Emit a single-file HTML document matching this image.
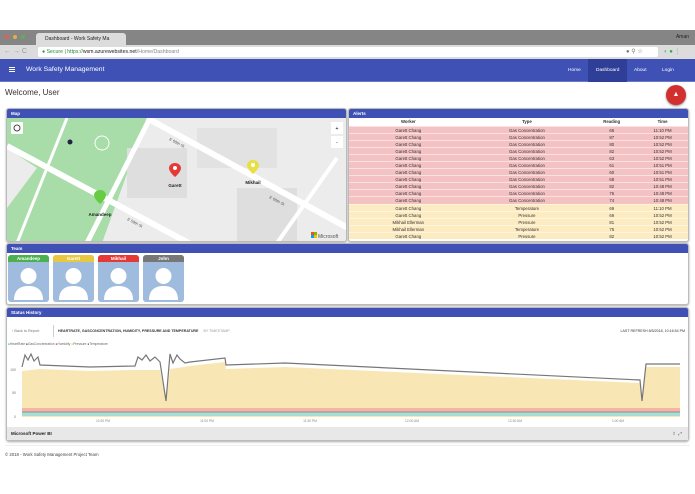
<!DOCTYPE html>
<html><head><meta charset="utf-8"><style>
*{box-sizing:border-box;margin:0;padding:0}
body{width:695px;height:494px;background:#fff;font-family:"Liberation Sans",sans-serif;position:relative;overflow:hidden;color:#333}
.abs{position:absolute}
.panel{position:absolute;border:1px solid #bbb;border-radius:3px;background:#fff;overflow:hidden;box-shadow:0 1px 2px #aaa}
.ph{height:9px;background:#3f51b5;color:#fff;font-size:4.5px;font-weight:bold;line-height:9px;padding-left:4px}
.row{display:flex;height:7.05px;font-size:4.3px;line-height:7px;text-align:center;border-top:0.5px solid rgba(255,255,255,.5)}
.row div{overflow:hidden;white-space:nowrap}
.c1{width:35%}.c2{width:35%}.c3{width:15%}.c4{width:15%}
.r{background:#f4c2c2}.y{background:#fdebc2}
.hd{font-weight:bold;border:none;height:8px}
.card{position:absolute;top:255px;width:41px;height:47px;background:#9fbbdd;border-radius:3px;overflow:hidden}
.card .h{height:7px;color:#fff;font-size:4.5px;font-weight:bold;text-align:center;line-height:7px}
</style></head><body>
<div class="abs" style="left:0;top:30px;width:695px;height:15px;background:#858585"></div>
<div class="abs" style="left:5px;top:35px;width:4px;height:4px;border-radius:50%;background:#e0605a"></div>
<div class="abs" style="left:13px;top:35px;width:4px;height:4px;border-radius:50%;background:#e0b040"></div>
<div class="abs" style="left:21px;top:35px;width:4px;height:4px;border-radius:50%;background:#60b050"></div>
<div class="abs" style="left:36px;top:33px;width:90px;height:12px;background:#dcdcdc;border-radius:3px 3px 0 0;font-size:5px;line-height:12px;padding-left:9px;color:#222">Dashboard - Work Safety Ma</div>
<div class="abs" style="right:6px;top:34px;font-size:5px;color:#222">Aman</div>
<div class="abs" style="left:0;top:45px;width:695px;height:14px;background:#dcdcdc"></div>
<div class="abs" style="left:4px;top:47px;font-size:7px;color:#999;line-height:9px">← → C</div>
<div class="abs" style="left:38px;top:47px;width:620px;height:10px;background:#fff;border-radius:2px;font-size:5.2px;line-height:10px;padding-left:4px;color:#2a8a3a">&#9679; Secure | <span>https://</span><span style="color:#222">wsm.azurewebsites.net</span><span style="color:#888">/Home/Dashboard</span></div>
<div class="abs" style="left:626px;top:48px;font-size:6px;color:#777">● ⚲ ☆</div>
<div class="abs" style="left:664px;top:48px;font-size:6px;color:#5b9">◐ <span style="color:#3a3">●</span> ⋮</div>
<div class="abs" style="left:0;top:59px;width:695px;height:23px;background:#3f51b5;border-bottom:1px solid #6677c8"></div>
<div class="abs" style="left:9px;top:67px;width:6px;height:1px;background:#fff;box-shadow:0 2px 0 #fff,0 4px 0 #fff"></div>
<div class="abs" style="left:26px;top:66px;font-size:6.8px;color:#fff">Work Safety Management</div>
<div class="abs" style="left:588px;top:59px;width:39px;height:23px;background:#2f3f97"></div>
<div class="abs" style="left:568px;top:68px;font-size:4.8px;color:#fff">Home</div>
<div class="abs" style="left:596px;top:68px;font-size:4.8px;color:#fff">Dashboard</div>
<div class="abs" style="left:634px;top:68px;font-size:4.8px;color:#fff">About</div>
<div class="abs" style="left:662px;top:68px;font-size:4.8px;color:#fff">Login</div>
<div class="abs" style="left:5px;top:88px;font-size:8px;color:#333">Welcome, User</div>
<div class="abs" style="left:666px;top:85px;width:20px;height:20px;border-radius:50%;background:#d32f2f;color:#fff;font-size:7px;text-align:center;line-height:20px;box-shadow:0 1px 2px #888">▲</div>

<div class="panel" style="left:6px;top:108px;width:341px;height:134px">
<div class="ph">Map</div>
<svg width="341" height="125" style="display:block;background:#ececec">
<polygon points="0,0 140,0 95,125 0,125" fill="#a8dca8"/>
<polygon points="0,30 30,50 0,90" fill="#ececec"/>
<rect x="120" y="30" width="60" height="50" fill="#dedede"/><rect x="230" y="70" width="60" height="55" fill="#dedede"/><rect x="190" y="10" width="80" height="40" fill="#e2e2e2"/>
<line x1="0" y1="28" x2="341" y2="210" stroke="#fff" stroke-width="6"/>
<line x1="140" y1="0" x2="341" y2="110" stroke="#fff" stroke-width="6"/>
<line x1="143" y1="0" x2="80" y2="125" stroke="#fff" stroke-width="5"/>
<line x1="60" y1="0" x2="10" y2="125" stroke="#fff" stroke-width="3"/>
<line x1="330" y1="40" x2="270" y2="125" stroke="#fff" stroke-width="4"/>
<circle cx="95" cy="25" r="7" fill="none" stroke="#fff"/>
<circle cx="63" cy="24" r="2.5" fill="#224"/>
<text x="162" y="22" font-size="4" fill="#555" transform="rotate(28 162 22)">E 60th St</text>
<text x="262" y="80" font-size="4" fill="#555" transform="rotate(28 262 80)">E 60th St</text>
<text x="120" y="102" font-size="4" fill="#555" transform="rotate(28 120 102)">E 59th St</text>
<path d="M168 45c-4 0-6 3-6 5 0 4 6 9 6 9s6-5 6-9c0-2-2-5-6-5z" fill="#e53935"/><circle cx="168" cy="50" r="2" fill="#fff"/>
<text x="168" y="69" font-size="4.5" font-weight="bold" text-anchor="middle" fill="#222">Garett</text>
<path d="M246 42c-4 0-6 3-6 5 0 4 6 9 6 9s6-5 6-9c0-2-2-5-6-5z" fill="#e8e040"/><circle cx="246" cy="47" r="2" fill="#fff"/>
<text x="246" y="66" font-size="4.5" font-weight="bold" text-anchor="middle" fill="#222">Mikhail</text>
<path d="M93 72c-4 0-6 3-6 5 0 4 6 9 6 9s6-5 6-9c0-2-2-5-6-5z" fill="#66cc44"/>
<text x="93" y="98" font-size="4.5" font-weight="bold" text-anchor="middle" fill="#222">Amandeep</text>
<rect x="4" y="4" width="12" height="12" fill="#fff" rx="1"/><circle cx="10" cy="10" r="3" fill="none" stroke="#444"/>
<rect x="324" y="4" width="12" height="12" fill="#fff"/><rect x="324" y="18" width="12" height="12" fill="#fff"/>
<text x="330" y="12" font-size="5" text-anchor="middle">+</text><text x="330" y="26" font-size="5" text-anchor="middle">-</text>
<rect x="304" y="114" width="3" height="3" fill="#f25022"/><rect x="307" y="114" width="3" height="3" fill="#7fba00"/><rect x="304" y="117" width="3" height="3" fill="#00a4ef"/><rect x="307" y="117" width="3" height="3" fill="#ffb900"/>
<text x="311" y="120" font-size="5" fill="#555">Microsoft</text>
</svg></div>

<div class="panel" style="left:348px;top:108px;width:341px;height:134px">
<div class="ph">Alerts</div>
<div class="row hd"><div class="c1">Worker</div><div class="c2">Type</div><div class="c3">Reading</div><div class="c4">Time</div></div>
<div class="row r"><div class="c1">Garett Chang</div><div class="c2">Gas Concentration</div><div class="c3">66</div><div class="c4">11:10 PM</div></div>
<div class="row r"><div class="c1">Garett Chang</div><div class="c2">Gas Concentration</div><div class="c3">87</div><div class="c4">10:52 PM</div></div>
<div class="row r"><div class="c1">Garett Chang</div><div class="c2">Gas Concentration</div><div class="c3">80</div><div class="c4">10:52 PM</div></div>
<div class="row r"><div class="c1">Garett Chang</div><div class="c2">Gas Concentration</div><div class="c3">82</div><div class="c4">10:52 PM</div></div>
<div class="row r"><div class="c1">Garett Chang</div><div class="c2">Gas Concentration</div><div class="c3">63</div><div class="c4">10:52 PM</div></div>
<div class="row r"><div class="c1">Garett Chang</div><div class="c2">Gas Concentration</div><div class="c3">61</div><div class="c4">10:51 PM</div></div>
<div class="row r"><div class="c1">Garett Chang</div><div class="c2">Gas Concentration</div><div class="c3">60</div><div class="c4">10:51 PM</div></div>
<div class="row r"><div class="c1">Garett Chang</div><div class="c2">Gas Concentration</div><div class="c3">68</div><div class="c4">10:51 PM</div></div>
<div class="row r"><div class="c1">Garett Chang</div><div class="c2">Gas Concentration</div><div class="c3">82</div><div class="c4">10:48 PM</div></div>
<div class="row r"><div class="c1">Garett Chang</div><div class="c2">Gas Concentration</div><div class="c3">76</div><div class="c4">10:48 PM</div></div>
<div class="row r"><div class="c1">Garett Chang</div><div class="c2">Gas Concentration</div><div class="c3">74</div><div class="c4">10:48 PM</div></div>
<div class="row y"><div class="c1">Garett Chang</div><div class="c2">Temperature</div><div class="c3">69</div><div class="c4">11:10 PM</div></div>
<div class="row y"><div class="c1">Garett Chang</div><div class="c2">Pressure</div><div class="c3">69</div><div class="c4">10:52 PM</div></div>
<div class="row y"><div class="c1">Mikhail Ellerman</div><div class="c2">Pressure</div><div class="c3">81</div><div class="c4">10:52 PM</div></div>
<div class="row y"><div class="c1">Mikhail Ellerman</div><div class="c2">Temperature</div><div class="c3">75</div><div class="c4">10:52 PM</div></div>
<div class="row y"><div class="c1">Garett Chang</div><div class="c2">Pressure</div><div class="c3">82</div><div class="c4">10:52 PM</div></div>
</div>

<div class="panel" style="left:6px;top:243px;width:683px;height:62px"><div class="ph">Team</div></div>
<div class="card" style="left:8px"><div class="h" style="background:#4caf50">Amandeep</div><svg width="41" height="40"><circle cx="20.5" cy="14" r="8" fill="#fff"/><path d="M6 38c0-10 6-14 14.5-14S35 28 35 38z" fill="#fff"/></svg></div>
<div class="card" style="left:53px"><div class="h" style="background:#e8c840">Garett</div><svg width="41" height="40"><circle cx="20.5" cy="14" r="8" fill="#fff"/><path d="M6 38c0-10 6-14 14.5-14S35 28 35 38z" fill="#fff"/></svg></div>
<div class="card" style="left:98px"><div class="h" style="background:#e53935">Mikhail</div><svg width="41" height="40"><circle cx="20.5" cy="14" r="8" fill="#fff"/><path d="M6 38c0-10 6-14 14.5-14S35 28 35 38z" fill="#fff"/></svg></div>
<div class="card" style="left:143px"><div class="h" style="background:#777">John</div><svg width="41" height="40"><circle cx="20.5" cy="14" r="8" fill="#fff"/><path d="M6 38c0-10 6-14 14.5-14S35 28 35 38z" fill="#fff"/></svg></div>

<div class="panel" style="left:6px;top:307px;width:683px;height:134px"><div class="ph">Status History</div></div>
<div class="abs" style="left:12px;top:329px;font-size:3.8px;color:#777">‹ Back to Report</div>
<div class="abs" style="left:53px;top:325px;width:1px;height:12px;background:#ccc"></div>
<div class="abs" style="left:58px;top:329px;font-size:3.6px;color:#333;font-weight:bold">HEARTRATE, GASCONCENTRATION, HUMIDITY, PRESSURE AND TEMPERATURE <span style="color:#999;font-weight:normal;margin-left:4px">BY TIMESTAMP</span></div>
<div class="abs" style="right:10px;top:329px;font-size:3.6px;color:#333">LAST REFRESH 8/5/2018, 10:16:54 PM</div>
<div class="abs" style="left:8px;top:342px;font-size:3.3px;color:#666"><span style="color:#3b9">●</span>HeartRate <span style="color:#222">●</span>GasConcentration <span style="color:#e33">●</span>Humidity <span style="color:#ec3">●</span>Pressure <span style="color:#444">●</span>Temperature</div>
<svg class="abs" style="left:0;top:345px" width="695" height="82">
<text x="16" y="26" font-size="3.5" fill="#777" text-anchor="end">100</text>
<text x="16" y="49" font-size="3.5" fill="#777" text-anchor="end">50</text>
<text x="16" y="73" font-size="3.5" fill="#777" text-anchor="end">0</text>
<path d="M22 26 L40 24 L90 26 L135 25 L160 25 L166 56 L170 24 L190 21 L225 17 L226 24 L285 22 L640 38 L642 56 L646 22 L680 22 L680 72 L22 72Z" fill="#f8e7b5"/>
<path d="M22 22 L25 10 L28 15 L31 9 L34 16 L38 12 L40 20 L90 22 L135 21 L138 12 L142 15 L146 10 L150 16 L155 12 L160 17 L166 56 L170 9 L173 18 L177 10 L180 14 L185 18 L190 17 L225 13 L226 20 L285 18 L640 35 L642 56 L646 19 L680 19" fill="none" stroke="#777" stroke-width="1.2"/>
<rect x="22" y="63" width="658" height="4" fill="#f5b5a5"/>
<rect x="22" y="67" width="658" height="4" fill="#a8ddd5"/>
<line x1="22" y1="67" x2="680" y2="67" stroke="#555" stroke-width="0.6"/>
<text x="103" y="77" font-size="3.3" fill="#888" text-anchor="middle">10:30 PM</text>
<text x="207" y="77" font-size="3.3" fill="#888" text-anchor="middle">11:00 PM</text>
<text x="310" y="77" font-size="3.3" fill="#888" text-anchor="middle">11:30 PM</text>
<text x="412" y="77" font-size="3.3" fill="#888" text-anchor="middle">12:00 AM</text>
<text x="515" y="77" font-size="3.3" fill="#888" text-anchor="middle">12:30 AM</text>
<text x="618" y="77" font-size="3.3" fill="#888" text-anchor="middle">1:00 AM</text>
</svg>
<div class="abs" style="left:7px;top:427px;width:681px;height:13px;background:#e8e8e8;font-size:4.5px;font-weight:bold;line-height:13px;padding-left:4px;color:#222">Microsoft Power BI<span style="float:right;margin-right:6px;color:#666;font-weight:normal">⇪ &nbsp;⤢</span></div>
<div class="abs" style="left:5px;top:445px;width:685px;height:1px;background:#eee"></div>
<div class="abs" style="left:5px;top:452px;font-size:4.3px;color:#444">© 2018 - Work Safety Management Project Team</div>
</body></html>
